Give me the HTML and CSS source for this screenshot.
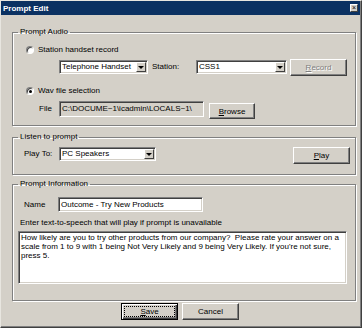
FILE: index.html
```html
<!DOCTYPE html>
<html lang="en">
<head>
  <meta charset="UTF-8">
  <meta name="viewport" content="width=device-width, initial-scale=1.0">
  <title>Prompt Edit</title>
  <link rel="stylesheet" href="styles.css">
</head>
<body>
  <div class="window">
    <div class="titlebar">
      <span class="title">Prompt Edit</span>
      <span class="close-btn">&times;</span>
    </div>

    <div class="dialog">
      <fieldset class="group group-audio">
        <legend>Prompt Audio</legend>

        <div class="radio-row">
          <span class="radio"></span>
          <span class="label">Station handset record</span>
        </div>

        <div class="row row-station">
          <div class="combo combo-handset">
            <span class="combo-text">Telephone Handset</span>
            <span class="combo-btn"></span>
          </div>
          <span class="label station-label">Station:</span>
          <div class="combo combo-station">
            <span class="combo-text">CSS1</span>
            <span class="combo-btn"></span>
          </div>
          <button class="btn btn-record" disabled><u>R</u>ecord</button>
        </div>

        <div class="radio-row radio-row-wav">
          <span class="radio checked"></span>
          <span class="label">Wav file selection</span>
        </div>

        <div class="row row-file">
          <span class="label file-label">File</span>
          <div class="field field-readonly field-file">C:\DOCUME~1\icadmin\LOCALS~1\</div>
          <button class="btn btn-browse"><u>B</u>rowse</button>
        </div>
      </fieldset>

      <fieldset class="group group-listen">
        <legend>Listen to prompt</legend>
        <div class="row row-play">
          <span class="label play-label">Play To:</span>
          <div class="combo combo-speakers">
            <span class="combo-text">PC Speakers</span>
            <span class="combo-btn"></span>
          </div>
          <button class="btn btn-play"><u>P</u>lay</button>
        </div>
      </fieldset>

      <fieldset class="group group-info">
        <legend>Prompt Information</legend>
        <div class="row row-name">
          <span class="label name-label">Name</span>
          <div class="field field-name">Outcome - Try New Products</div>
        </div>
        <div class="tts-label">Enter text-to-speech that will play if prompt is unavailable</div>
        <div class="field tts-text">How likely are you to try other products from our company?&nbsp; Please rate your answer on a<br>scale from 1 to 9 with 1 being Not Very Likely and 9 being Very Likely. If you're not sure,<br>press 5.</div>
      </fieldset>

      <div class="actions">
        <button class="btn btn-default"><span class="focus"><u>S</u>ave</span></button>
        <button class="btn">Cancel</button>
      </div>
    </div>
  </div>
</body>
</html>
```

FILE: styles.css
```css
body {
  margin: 0;
  padding: 0;
  background-color: #ffffff;
  font-family: "Liberation Sans", Arial, sans-serif;
  font-size: 8px;
  color: #000;
}
.window {
  width: 362px;
  height: 328px;
  box-sizing: border-box;
  background-color: #d4d0c8;
  border: 1px solid;
  border-color: #e8e6e0 #404040 #404040 #e8e6e0;
  box-shadow: inset -1px -1px 0 #808080;
}
.titlebar {
  height: 14px;
  margin: 0 1px 0 0;
  background-color: #0b3162;
  display: flex;
  align-items: center;
  justify-content: space-between;
  padding: 0 2px 0 2px;
}
.title {
  color: #fff;
  font-weight: bold;
  font-size: 8px;
}
.close-btn {
  width: 6px;
  height: 6px;
  background-color: #d4d0c8;
  border: 1px solid;
  border-color: #fff #404040 #404040 #fff;
  font-size: 7px;
  line-height: 6px;
  text-align: center;
  color: #000;
}
.dialog {
  padding: 0 5px 0 11px;
}
.group {
  margin: 0;
  padding: 0;
  border: 1px solid #808080;
  box-shadow: 1px 1px 0 #fff, inset 1px 1px 0 #fff;
  min-width: 0;
}
.group legend {
  margin-left: 5px;
  padding: 0 2px;
  line-height: 10px;
}
.group-audio {
  margin-top: 12px;
  padding-top: 7px;
  padding-bottom: 6px;
}
.group-listen {
  margin-top: 6px;
  padding-top: 5px;
  padding-bottom: 10px;
}
.group-info {
  margin-top: 4px;
  padding-top: 8px;
  padding-bottom: 16px;
}
.row {
  display: flex;
  align-items: flex-start;
}
.label {
  line-height: 12px;
  white-space: nowrap;
}
.radio-row {
  display: flex;
  align-items: center;
  height: 12px;
  margin-left: 13px;
}
.radio-row .label {
  margin-left: 4px;
}
.radio-row-wav {
  margin-top: 9px;
}
.radio {
  position: relative;
  width: 6px;
  height: 6px;
  border-radius: 50%;
  background-color: #fff;
  border: 1px solid;
  border-color: #808080 #fff #fff #808080;
  box-shadow: inset 1px 1px 0 #404040;
}
.radio.checked::after {
  content: "";
  position: absolute;
  left: 2px;
  top: 2px;
  width: 3px;
  height: 3px;
  border-radius: 50%;
  background-color: #000;
}
.field, .combo {
  box-sizing: border-box;
  background-color: #fff;
  border: 1px solid;
  border-color: #808080 #fff #fff #808080;
  box-shadow: inset 1px 1px 0 #404040, inset -1px -1px 0 #d4d0c8;
  white-space: nowrap;
  overflow: hidden;
}
.combo {
  display: flex;
  align-items: center;
  height: 14px;
  padding: 0 1px 0 2px;
}
.combo-text {
  flex: 1;
  line-height: 12px;
}
.combo-btn {
  position: relative;
  width: 8px;
  height: 8px;
  background-color: #d4d0c8;
  border: 1px solid;
  border-color: #fff #404040 #404040 #fff;
}
.combo-btn::after {
  content: "";
  position: absolute;
  left: 1px;
  top: 3px;
  border-left: 3px solid transparent;
  border-right: 3px solid transparent;
  border-top: 3px solid #000;
}
.btn {
  box-sizing: border-box;
  width: 57px;
  height: 17px;
  padding: 0;
  font-family: inherit;
  font-size: 8px;
  color: #000;
  background-color: #d4d0c8;
  border: 1px solid;
  border-color: #fff #404040 #404040 #fff;
  box-shadow: inset -1px -1px 0 #808080;
}
.btn:disabled {
  color: #808080;
  text-shadow: 1px 1px 0 #fff;
}
.row-station {
  margin-top: 3px;
  margin-left: 46px;
}
.combo-handset {
  width: 89px;
  margin-top: 1px;
}
.station-label {
  width: 44px;
  margin-left: 4px;
  line-height: 16px;
}
.combo-station {
  width: 91px;
  margin-top: 1px;
}
.btn-record {
  margin-left: 3px;
}
.row-file {
  margin-top: 4px;
  margin-left: 26px;
}
.file-label {
  width: 20px;
  line-height: 16px;
}
.field-readonly {
  background-color: #d4d0c8;
}
.field-file {
  width: 145px;
  height: 16px;
  line-height: 14px;
  padding: 0 2px;
}
.btn-browse {
  width: 46px;
  height: 16px;
  margin: 2px 0 0 5px;
}
.row-play {
  margin-left: 11px;
  margin-right: 5px;
}
.play-label {
  width: 35px;
  line-height: 14px;
}
.combo-speakers {
  width: 97px;
}
.btn-play {
  margin-left: auto;
}
.row-name {
  margin-left: 11px;
}
.name-label {
  width: 34px;
  line-height: 15px;
}
.field-name {
  width: 145px;
  height: 15px;
  line-height: 13px;
  padding: 0 2px;
}
.tts-label {
  margin: 6px 0 0 7px;
  line-height: 10px;
}
.tts-text {
  width: 329px;
  height: 53px;
  margin: 3px 0 0 5px;
  padding: 1px 2px;
  line-height: 9px;
}
.actions {
  display: flex;
  justify-content: center;
  gap: 4px;
  margin-top: 2px;
  padding-right: 8px;
}
.btn-default {
  border: 1px solid #000;
  box-shadow: inset 1px 1px 0 #fff, inset -1px -1px 0 #404040, inset -2px -2px 0 #808080;
  padding: 2px;
}
.focus {
  display: block;
  height: 100%;
  box-sizing: border-box;
  border: 1px dotted #000;
  line-height: 9px;
}
```
